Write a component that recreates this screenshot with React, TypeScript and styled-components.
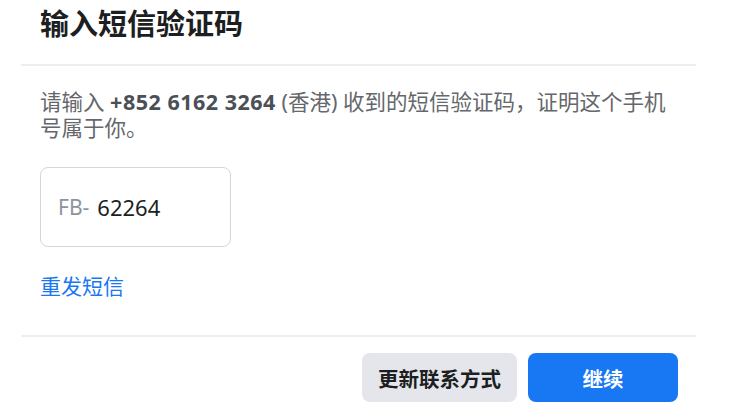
import styled, { createGlobalStyle } from "styled-components";

const GlobalStyle = createGlobalStyle`
    body {
        margin: 0;
        background: #ffffff;
        font-family: "Noto Sans", "Noto Sans CJK SC", sans-serif;
    }
`;

const Dialog = styled.div`
    width: 675px;
    margin-left: 21px;
    display: flex;
    flex-direction: column;
`;

const Header = styled.div`
    height: 66px;
    padding: 6px 19px 0;
    box-sizing: border-box;
    border-bottom: 2px solid #eceef1;
`;

const Title = styled.h2`
    margin: 0;
    font-size: 29px;
    line-height: 36px;
    font-weight: 700;
    color: #1c1e21;
`;

const Body = styled.div`
    padding: 23px 19px 36px;
    display: flex;
    flex-direction: column;
    align-items: flex-start;
`;

const Message = styled.p`
    margin: 0;
    font-size: 21.5px;
    line-height: 26px;
    color: #65676b;
    width: 100%;

    strong {
        font-weight: 700;
        color: #4b4f56;
        letter-spacing: 0.5px;
    }
`;

const CodeBox = styled.label`
    margin-top: 26px;
    width: 191px;
    height: 80px;
    box-sizing: border-box;
    border: 1.5px solid #d3d6db;
    border-radius: 8px;
    display: flex;
    align-items: center;
    padding-left: 17px;
    gap: 8px;
`;

const Prefix = styled.span`
    font-size: 21px;
    color: #8d949e;
`;

const CodeInput = styled.input`
    border: none;
    outline: none;
    width: 100px;
    padding: 0;
    font-family: inherit;
    font-size: 22px;
    color: #1c1e21;
    background: transparent;
`;

const Link = styled.a`
    margin-top: 26px;
    font-size: 21px;
    line-height: 26px;
    color: #1877f2;
    text-decoration: none;
    cursor: pointer;
`;

const Footer = styled.div`
    border-top: 2px solid #eceef1;
    padding: 16px 18px 0;
    display: flex;
    justify-content: flex-end;
    gap: 11px;
`;

const Button = styled.button<{ $primary?: boolean }>`
    height: 49px;
    width: ${(p) => (p.$primary ? "150px" : "155px")};
    border: none;
    border-radius: 8px;
    font-family: inherit;
    font-size: 20.5px;
    font-weight: 700;
    background: ${(p) => (p.$primary ? "#1877f2" : "#e4e6eb")};
    color: ${(p) => (p.$primary ? "#ffffff" : "#1c1e21")};
    cursor: pointer;
`;

const App = () => {
    return (
        <>
            <GlobalStyle />
            <Dialog>
                <Header>
                    <Title>输入短信验证码</Title>
                </Header>
                <Body>
                    <Message>
                        请输入 <strong>+852 6162 3264</strong> (香港) 收到的短信验证码，证明这个手机号属于你。
                    </Message>
                    <CodeBox>
                        <Prefix>FB-</Prefix>
                        <CodeInput type="text" defaultValue="62264" />
                    </CodeBox>
                    <Link>重发短信</Link>
                </Body>
                <Footer>
                    <Button>更新联系方式</Button>
                    <Button $primary>继续</Button>
                </Footer>
            </Dialog>
        </>
    );
};

export default App;
